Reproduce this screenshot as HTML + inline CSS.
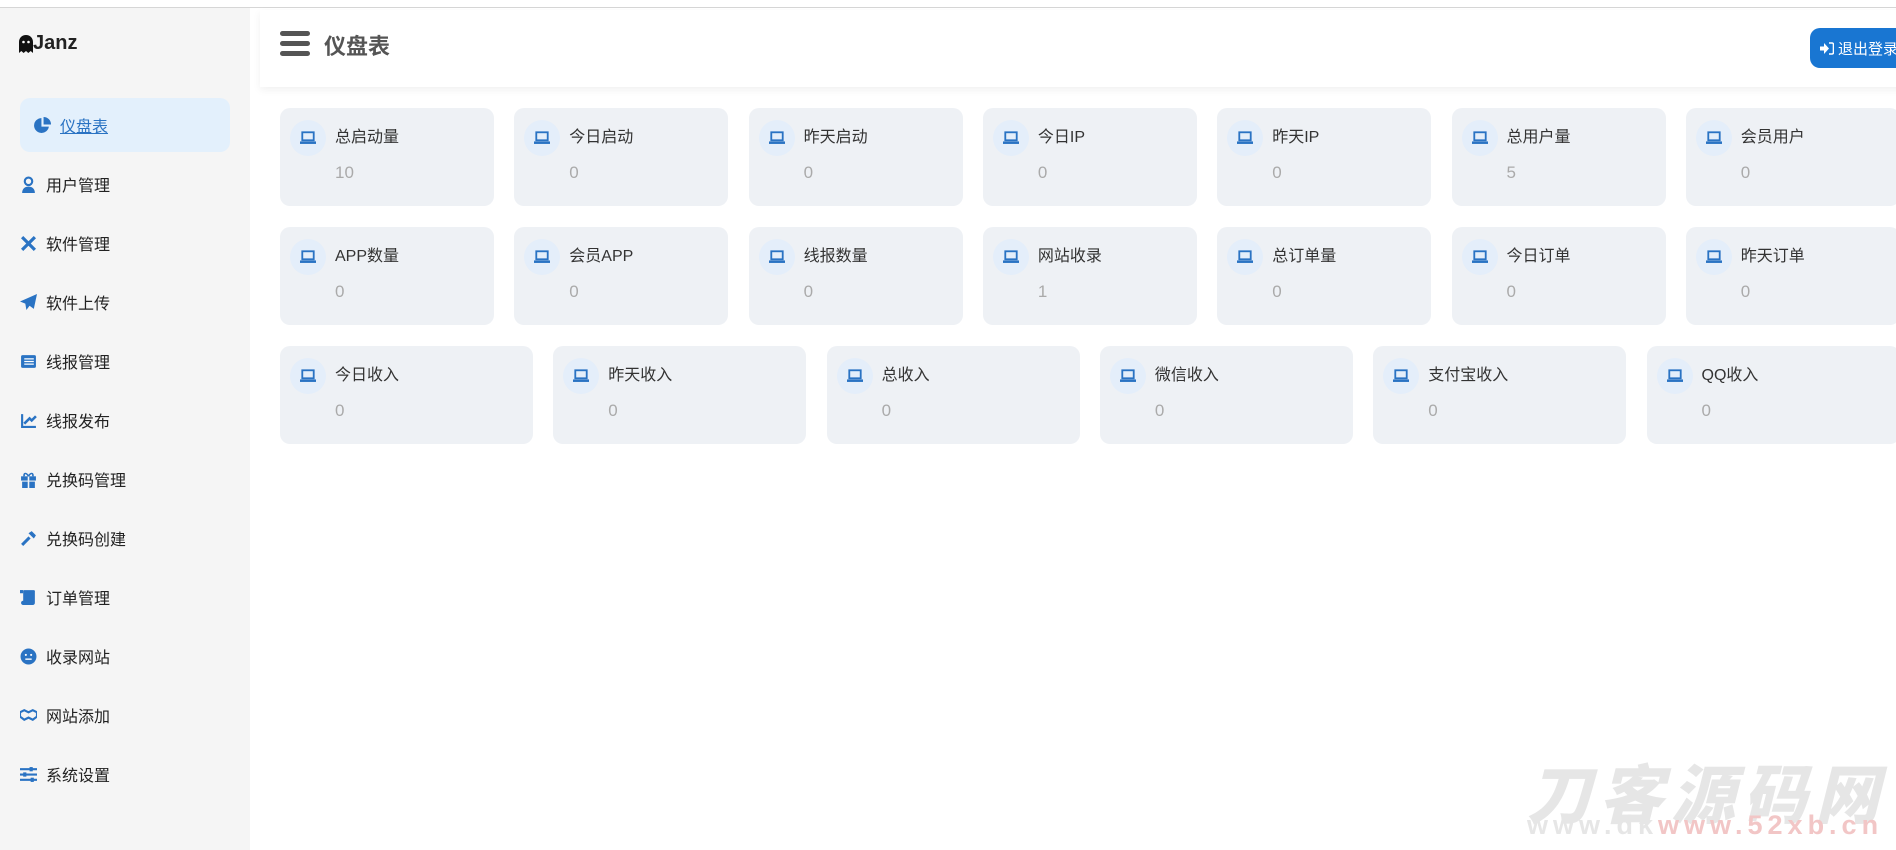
<!DOCTYPE html>
<html><head><meta charset="utf-8"><style>
*{margin:0;padding:0;box-sizing:border-box}
body{width:1896px;height:850px;overflow:hidden;background:#fff;position:relative;font-family:"Liberation Sans","Noto Sans CJK SC",sans-serif;color:#333}
.topline{position:absolute;left:0;top:7px;width:1896px;height:1px;background:#d6d6d6}
.side{position:absolute;left:0;top:8px;width:250px;height:842px;background:#f5f5f5}
.logo{position:absolute;left:19px;top:24px;font-size:20px;font-weight:bold;color:#222;display:flex;align-items:center}
.active{position:absolute;left:20px;top:98px;width:210px;height:54px;background:#e3f0fc;border-radius:10px}
.mi{position:absolute;left:20px;height:24px;display:flex;align-items:center;font-size:16px;color:#222}
.mi svg{width:17px;height:17px;margin-right:9px;flex:none}
.mi.a{left:34px;color:#2a73c3;text-decoration:underline}
.header{position:absolute;left:260px;top:10px;width:1660px;height:77px;background:#fff;box-shadow:0 3px 8px rgba(0,0,0,.06)}
.title{position:absolute;left:324px;top:29px;font-size:22px;font-weight:bold;color:#555}
.btn{position:absolute;left:1810px;top:28px;width:100px;height:40px;background:#1976d2;border-radius:10px;color:#fff;font-size:15px;display:flex;align-items:center;padding-left:10px}
.card{position:absolute;width:214px;height:98px;background:#eef1f5;border-radius:10px}
.card .ic{position:absolute;left:10px;top:12px;width:36px;height:36px;border-radius:50%;background:#e4eefa;display:flex;align-items:center;justify-content:center}
.card .l{position:absolute;left:55px;top:15px;font-size:16px;color:#333}
.card .v{position:absolute;left:55px;top:55px;font-size:17px;color:#aaa}
.wm{position:absolute;left:1527px;top:745px;font-size:64px;font-weight:900;font-style:italic;color:#e6e6e6;letter-spacing:8px;white-space:nowrap}
.wm2{position:absolute;left:1527px;top:810px;font-size:27px;font-weight:bold;color:#e6e6e6;letter-spacing:5px;white-space:nowrap}
.wm2 span{color:#f2c6c6}
</style></head><body>
<div class="topline"></div>
<div class="side">
<div class="logo"><svg width="14" height="18" viewBox="0 0 14 18"><path d="M7 0C3 0 0 3 0 7v11l2.3-2 2.3 2L7 16l2.3 2 2.4-2L14 18V7c0-4-3-7-7-7z" fill="#111"/><circle cx="4.5" cy="7" r="1.3" fill="#fff"/><circle cx="9.5" cy="7" r="1.3" fill="#fff"/></svg>Janz</div>
<div class="active" style="top:90px"></div>
</div>
<div class="mi a" style="top:113px"><svg viewBox="0 0 16 16"><path d="M7 1a7 7 0 1 0 7 8H7z" fill="#2a73c3"/><path d="M9 0v7h7a7 7 0 0 0-7-7z" fill="#2a73c3"/></svg>仪盘表</div>
<div class="mi" style="top:172px"><svg viewBox="0 0 16 16"><circle cx="8" cy="5" r="3.5" fill="none" stroke="#2a73c3" stroke-width="2"/><path d="M2 16c0-4 2.5-6 6-6s6 2 6 6z" fill="#2a73c3"/></svg>用户管理</div>
<div class="mi" style="top:231px"><svg viewBox="0 0 16 16"><path d="M2 2l12 12M14 2L2 14" stroke="#2a73c3" stroke-width="3"/></svg>软件管理</div>
<div class="mi" style="top:290px"><svg viewBox="0 0 16 16"><path d="M16 0L0 7l5 2 1 6 3-4 4 3z" fill="#2a73c3"/></svg>软件上传</div>
<div class="mi" style="top:349px"><svg viewBox="0 0 16 16"><rect x="1" y="2" width="14" height="12" rx="1.5" fill="#2a73c3"/><path d="M4 5.5h9M4 8h9M4 10.5h9" stroke="#fff" stroke-width="1.2"/></svg>线报管理</div>
<div class="mi" style="top:408px"><svg viewBox="0 0 16 16"><path d="M1 2v13h14v-2H3V2z" fill="#2a73c3"/><path d="M4 11l5-5 2 2 4-4" stroke="#2a73c3" stroke-width="2.4" fill="none"/></svg>线报发布</div>
<div class="mi" style="top:467px"><svg viewBox="0 0 16 16"><rect x="1" y="5" width="14" height="4" fill="#2a73c3"/><rect x="2" y="10" width="12" height="6" fill="#2a73c3"/><path d="M8 5V16" stroke="#f5f5f5" stroke-width="1.5"/><path d="M8 5C6 1 3 2 4 5M8 5c2-4 5-3 4 0" stroke="#2a73c3" stroke-width="1.5" fill="none"/></svg>兑换码管理</div>
<div class="mi" style="top:526px"><svg viewBox="0 0 16 16"><path d="M1 13l7-7 2 2-7 7z" fill="#2a73c3"/><path d="M8 3l3-2 4 4-2 3z" fill="#2a73c3"/></svg>兑换码创建</div>
<div class="mi" style="top:585px"><svg viewBox="0 0 16 16"><rect x="3" y="1" width="11" height="12" rx="1" fill="#2a73c3"/><rect x="1" y="11" width="13" height="4" rx="2" fill="#2a73c3"/><rect x="0" y="1" width="3" height="3" fill="#2a73c3"/></svg>订单管理</div>
<div class="mi" style="top:644px"><svg viewBox="0 0 16 16"><circle cx="8" cy="8" r="7.5" fill="#2a73c3"/><circle cx="5.5" cy="6.5" r="1" fill="#fff"/><circle cx="10.5" cy="6.5" r="1" fill="#fff"/><path d="M5 10.5h6" stroke="#fff" stroke-width="1.3"/></svg>收录网站</div>
<div class="mi" style="top:703px"><svg viewBox="0 0 16 16"><path d="M0 5l4-2 4 2 4-2 4 2v4l-4 3-4-2-4 2-4-3z" fill="none" stroke="#2a73c3" stroke-width="2"/></svg>网站添加</div>
<div class="mi" style="top:762px"><svg viewBox="0 0 16 16"><path d="M0 3h16M0 8h16M0 13h16" stroke="#2a73c3" stroke-width="2"/><rect x="9" y="1" width="3" height="4" fill="#2a73c3"/><rect x="3" y="6" width="3" height="4" fill="#2a73c3"/><rect x="10" y="11" width="3" height="4" fill="#2a73c3"/></svg>系统设置</div>

<div class="header"></div>
<svg style="position:absolute;left:280px;top:31px" width="30" height="25" viewBox="0 0 30 25"><rect y="0" width="30" height="5" rx="2.5" fill="#555"/><rect y="10" width="30" height="5" rx="2.5" fill="#555"/><rect y="20" width="30" height="5" rx="2.5" fill="#555"/></svg>
<div class="title">仪盘表</div>
<div class="btn"><svg width="14" height="13" viewBox="0 0 14 13" style="margin-right:4px"><path d="M0 4.5h4V1l5 5.5-5 5.5V8.5H0z" fill="#fff"/><path d="M9 1h3a1.5 1.5 0 0 1 1.5 1.5v8A1.5 1.5 0 0 1 12 12H9" stroke="#fff" stroke-width="1.6" fill="none"/></svg>退出登录</div>

<div id="cards"></div>
<script>
var lap='<svg width="16" height="14" viewBox="0 0 14 12"><rect x="2" y="1" width="10" height="7" fill="none" stroke="#2a73c3" stroke-width="1.6"/><rect x="0" y="9" width="14" height="2.2" fill="#2a73c3"/></svg>';
var r1=[["总启动量","10"],["今日启动","0"],["昨天启动","0"],["今日IP","0"],["昨天IP","0"],["总用户量","5"],["会员用户","0"]];
var r2=[["APP数量","0"],["会员APP","0"],["线报数量","0"],["网站收录","1"],["总订单量","0"],["今日订单","0"],["昨天订单","0"]];
var r3=[["今日收入","0"],["昨天收入","0"],["总收入","0"],["微信收入","0"],["支付宝收入","0"],["QQ收入","0"]];
var h='';
function row(a,y,step,w){a.forEach(function(c,i){h+='<div class="card" style="left:'+(280+i*step)+'px;top:'+y+'px;width:'+w+'px"><div class="ic">'+lap+'</div><div class="l">'+c[0]+'</div><div class="v">'+c[1]+'</div></div>';});}
row(r1,108,234.3,214);row(r2,227,234.3,214);row(r3,346,273.3,253);
document.getElementById('cards').innerHTML=h;
</script>
<div class="wm">刀客源码网</div>
<div class="wm2">www.dk<span>www.52xb.cn</span></div>
</body></html>
